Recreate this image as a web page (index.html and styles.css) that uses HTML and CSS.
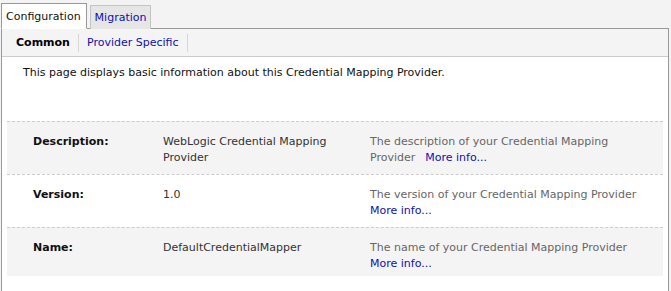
FILE: index.html
```html
<!DOCTYPE html>
<html lang="en">
<head>
  <meta charset="UTF-8" />
  <title>Credential Mapping Provider</title>
  <link rel="stylesheet" href="styles.css">
</head>
<body>
  <div class="tabs">
    <div class="tab active">Configuration</div>
    <a class="tab" href="#">Migration</a>
  </div>

  <div class="panel">
    <div class="subtabs">
      <span class="subtab current">Common</span>
      <a class="subtab" href="#">Provider Specific</a>
    </div>

    <div class="content">
      <p class="intro">This page displays basic information about this Credential Mapping Provider.</p>

      <div class="props">
        <div class="prop-row shaded">
          <div class="prop-label">Description:</div>
          <div class="prop-value">WebLogic Credential Mapping Provider</div>
          <div class="prop-help">The description of your Credential Mapping Provider<a class="more spaced" href="#">More info...</a></div>
        </div>
        <div class="prop-row">
          <div class="prop-label">Version:</div>
          <div class="prop-value">1.0</div>
          <div class="prop-help">The version of your Credential Mapping Provider <a class="more" href="#">More info...</a></div>
        </div>
        <div class="prop-row shaded last">
          <div class="prop-label">Name:</div>
          <div class="prop-value">DefaultCredentialMapper</div>
          <div class="prop-help">The name of your Credential Mapping Provider <a class="more" href="#">More info...</a></div>
        </div>
      </div>
    </div>
  </div>
</body>
</html>
```

FILE: styles.css
```css
* {
  box-sizing: border-box;
}
body {
  margin: 0;
  padding: 3px 0 0 1px;
  background-color: #f3f3f3;
  font-family: 'DejaVu Sans', Verdana, sans-serif;
  font-size: 11px;
  color: #222;
}
a {
  color: #1010b0;
  text-decoration: none;
}
.tabs {
  display: flex;
  align-items: flex-end;
  gap: 3px;
  height: 26px;
}
.tab {
  display: block;
  height: 24px;
  padding: 5px 4px 0 4px;
  font-size: 11px;
  border: 1px solid #c4c4c4;
  border-bottom: none;
  background-color: #e6e6e6;
}
.tab.active {
  position: relative;
  z-index: 1;
  height: 26px;
  padding: 6px 5px 0 4px;
  background-color: #fff;
  border-color: #999;
  border-bottom: 1px solid #fff;
  color: #111;
}
.panel {
  width: 668px;
  height: 277px;
  margin-top: -1px;
  border: 1px solid #999;
  background-color: #fff;
}
.subtabs {
  display: flex;
  align-items: center;
  height: 28px;
  padding-left: 6px;
  background-color: #f4f4f4;
  border-bottom: 1px solid #ccc;
}
.subtab {
  padding: 0 8px 0 8px;
  line-height: 18px;
  border-right: 1px solid #d6d6d6;
}
.subtab.current {
  font-weight: bold;
  color: #000;
}
.content {
  padding: 0 5px;
}
.intro {
  margin: 0;
  padding: 8px 0 0 16px;
  line-height: 16px;
  height: 64px;
  color: #111;
}
.prop-row {
  display: grid;
  grid-template-columns: 130px 207px 1fr;
  padding: 12px 0 8px;
  border-top: 1px dashed #ccc;
  line-height: 16px;
}
.prop-row.shaded {
  background-color: #f4f4f4;
}
.prop-row.last {
  padding-bottom: 4px;
}
.prop-label {
  padding-left: 26px;
  font-weight: bold;
  color: #111;
}
.prop-value {
  padding-left: 26px;
  color: #333;
}
.prop-help {
  padding: 0 10px 0 26px;
  color: #666;
}
.more.spaced {
  margin-left: 10px;
}
```
